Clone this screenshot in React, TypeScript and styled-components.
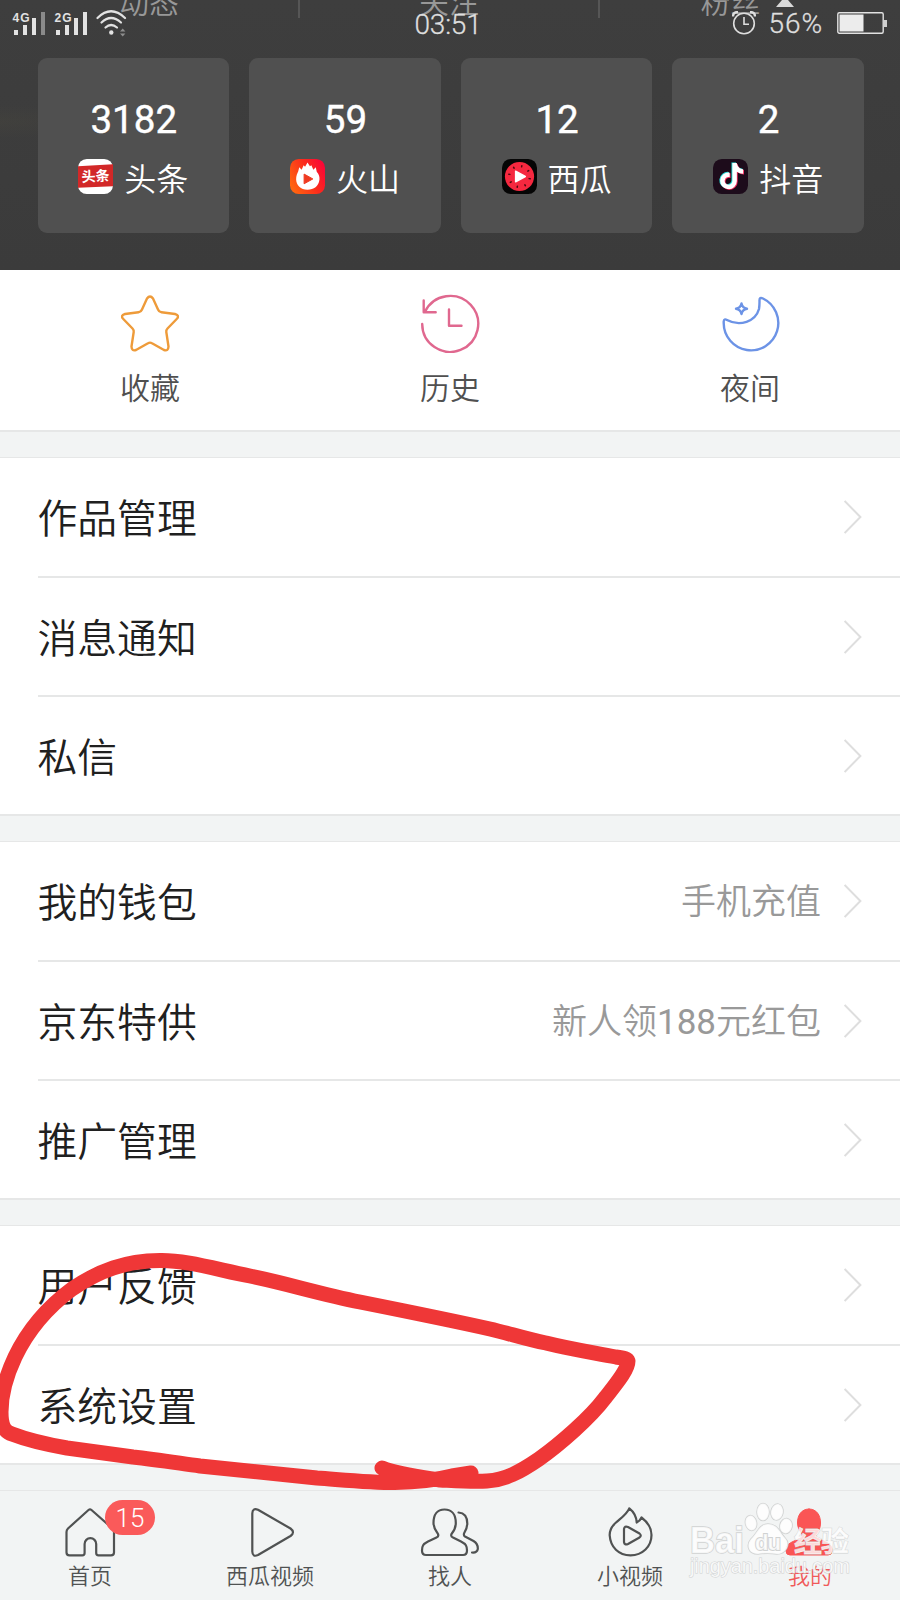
import React from "react";
import styled, { createGlobalStyle } from "styled-components";
import { FaTiktok } from "react-icons/fa6";

const GlobalStyle = createGlobalStyle`
  * { box-sizing: border-box; }
  body { margin: 0; background: #f2f4f4; }
`;

const CJK = `"Noto Sans CJK SC", "Noto Sans", sans-serif`;

const Screen = styled.div`
  position: relative;
  width: 900px;
  height: 1600px;
  overflow: hidden;
  display: flex;
  flex-direction: column;
  background: #f2f4f4;
  font-family: ${CJK};
  font-weight: 350;
`;

const Header = styled.header`
  height: 270px;
  display: flex;
  flex-direction: column;
  background:
    radial-gradient(ellipse at 0% 45%, rgba(74, 72, 62, 0.3), transparent 8%),
    linear-gradient(#3e3e3e, #3b3b3b);
`;

const CountTabs = styled.div`
  height: 58px;
  overflow: hidden;
  display: grid;
  grid-template-columns: repeat(3, 1fr);
`;

const CountTab = styled.div<{ $divided?: boolean }>`
  height: 18px;
  display: flex;
  align-items: flex-end;
  justify-content: center;
  gap: 15px;
  color: #989898;
  font-size: 30px;
  line-height: 36px;
  border-right: ${(p) => (p.$divided ? "2px solid #565656" : "0")};
  &:last-child {
    padding-right: 6px;
  }
`;

const Caret = styled.svg`
  align-self: flex-start;
  flex: none;
`;

const StatusBar = styled.div`
  position: absolute;
  top: 0;
  left: 0;
  width: 900px;
  height: 46px;
  display: flex;
  align-items: center;
  justify-content: space-between;
  padding: 0 13px 0 12px;
`;

const StatusGroup = styled.div`
  display: flex;
  align-items: center;
  width: 300px;
`;

const StatusEnd = styled(StatusGroup)`
  justify-content: flex-end;
  gap: 13px;
`;

const StatusText = styled.span<{ $tracking: number }>`
  color: #dedede;
  font: 300 28px/32px Roboto, sans-serif;
  letter-spacing: ${(p) => p.$tracking}px;
  -webkit-text-stroke: 0.3px #dedede;
`;

const Percent = styled(StatusText)`
  padding-top: 1px;
  margin-right: 1px;
`;

const Clock = styled(StatusText)`
  padding-top: 3px;
  margin-right: 3px;
`;

const Cards = styled.div`
  display: grid;
  grid-template-columns: repeat(4, 1fr);
  gap: 20px;
  padding: 0 36px 0 37.5px;
`;

const Card = styled.div`
  height: 175px;
  border-radius: 9px;
  background: #505050;
  color: #fff;
  display: flex;
  flex-direction: column;
  align-items: center;
`;

const CardCount = styled.div`
  margin: 39px 0 0 1px;
  font: 400 38.6px/46px Roboto, sans-serif;
  -webkit-text-stroke: 0.4px #fff;
`;

const CardSource = styled.div`
  display: flex;
  align-items: center;
  gap: 11px;
  margin-top: 11px;
  height: 46px;
  font-size: 32px;
  line-height: 46px;
`;

const Logo = styled.svg`
  display: block;
  margin-bottom: 2px;
`;

const Shortcuts = styled.div`
  height: 160px;
  background: #fff;
  display: grid;
  grid-template-columns: repeat(3, 1fr);
`;

const Shortcut = styled.div`
  display: flex;
  flex-direction: column;
  align-items: center;
  padding-top: 23px;
  color: #505050;
  font-size: 30px;
  line-height: 40px;
`;

const LineIcon = styled.svg`
  display: block;
  fill: none;
  stroke-width: 2.4;
  stroke-linecap: round;
  stroke-linejoin: round;
  margin-bottom: 13px;
`;

const Gap = styled.div`
  flex: none;
  height: 28px;
  border-top: 2px solid #e6e7e7;
  border-bottom: 1px solid #e6e7e7;
`;

const Section = styled.section<{ $height: number }>`
  flex: none;
  height: ${(p) => p.$height}px;
  background: #fff;
  display: flex;
  flex-direction: column;
  padding-left: 37.5px;
`;

const Row = styled.div`
  flex: 0 0 119px;
  display: flex;
  align-items: center;
  padding-right: 38px;
  border-bottom: 2px solid #e6e7e7;
  &:first-child {
    flex-basis: 120px;
  }
  &:last-child {
    flex: 1;
    border-bottom: 0;
  }
`;

const RowLabel = styled.span`
  flex: 1;
  color: #202020;
  font-size: 39.8px;
  line-height: 58px;
  margin-bottom: 2px;
`;

const RowNote = styled.span`
  color: #999;
  font-family: Roboto, ${CJK};
  font-size: 35px;
  line-height: 50px;
  margin: 4px 23px 0 0;
`;

const Digits = styled.span`
  font-weight: 400;
`;

const NavBar = styled.nav`
  height: 109px;
  display: grid;
  grid-template-columns: repeat(5, 1fr);
`;

const NavItem = styled.div<{ $active?: boolean }>`
  position: relative;
  display: flex;
  flex-direction: column;
  align-items: center;
  padding-top: 15px;
  color: ${(p) => (p.$active ? "#f05a5a" : "#505252")};
  font-size: 22px;
  line-height: 30px;
`;

const NavIcon = styled.svg`
  display: block;
  margin-bottom: 1px;
  fill: none;
  stroke: #505252;
  stroke-width: 2.2;
  stroke-linejoin: round;
  stroke-linecap: round;
`;

const Badge = styled.span`
  position: absolute;
  left: 105px;
  top: 9px;
  width: 50px;
  height: 35px;
  border-radius: 18px;
  background: #fa5a5a;
  color: #fff;
  text-align: center;
  font: 300 26px/37px Roboto, sans-serif;
`;

const Overlay = styled.svg`
  position: absolute;
  left: 0;
  top: 1220px;
  pointer-events: none;
`;

const Signal = ({ label, dim }: { label: string; dim?: boolean }) => (
  <svg width="42" height="28" viewBox="0 0 42 28" fill="#e2e2e2">
    <text x="0.5" y="12.5" fontFamily="Liberation Sans, sans-serif" fontWeight="700" fontSize="12" textLength="17">{label}</text>
    <rect x="2" y="21" width="4" height="5" />
    <rect x="11" y="16" width="4" height="10" />
    <rect x="20" y="9" width="4" height="17" />
    <rect x="29" y="3" width="4" height="23" fill={dim ? "#8a8a8a" : "#e2e2e2"} />
  </svg>
);

const Wifi = () => (
  <svg width="34" height="28" viewBox="0 0 34 28" fill="none" stroke="#e2e2e2" strokeWidth="2.2" strokeLinecap="round">
    <path d="M1.5 9 Q15 -4.500 29 9" />
    <path d="M5.500 13.500 Q15 4.500 25 13.500" />
    <path d="M9.500 18.500 Q15 13.500 21 18.500" />
    <circle cx="15.300" cy="23.500" r="2.200" fill="#e2e2e2" stroke="none" />
    <path d="M24 22.500l2.700-3 2.700 3zM24 24.500l2.700 3 2.700-3z" fill="#8e8e8e" stroke="none" />
  </svg>
);

const Alarm = () => (
  <svg width="24" height="24" viewBox="0 0 24 24" fill="none" stroke="#dedede" strokeWidth="1.6">
    <circle cx="12" cy="12.500" r="10.300" />
    <path d="M12 6v7.200h5" />
    <path d="M1 5.500Q1 1 6 1M23 5.500Q23 1 18 1" strokeWidth="2.400" />
  </svg>
);

const Battery = () => (
  <svg width="50" height="24" viewBox="0 0 50 24">
    <rect x="0.800" y="1.800" width="45.400" height="20.400" rx="1.500" fill="none" stroke="#e2e2e2" strokeWidth="1.400" />
    <rect x="2.500" y="3.500" width="24" height="17" fill="#ececec" />
    <rect x="47" y="9" width="3" height="7" fill="#cfcfcf" />
  </svg>
);

const ToutiaoLogo = () => (
  <Logo width="35" height="35" viewBox="0 0 36 36">
    <rect width="36" height="36" rx="9" fill="#fff" />
    <path d="M0 7.500L36 5.500V28L0 29.500z" fill="#d22828" />
    <text x="18" y="23" textAnchor="middle" transform="rotate(-3 18 18)" fontFamily="Noto Sans CJK SC" fontWeight="700" fontSize="14.500" fill="#fff">头条</text>
  </Logo>
);

const HuoshanLogo = () => (
  <Logo width="35" height="35" viewBox="0 0 36 36">
    <defs>
      <linearGradient id="lava" x1="0" y1="0.700" x2="1" y2="0.200">
        <stop offset="0" stopColor="#ff6410" />
        <stop offset="0.550" stopColor="#fb2c1c" />
        <stop offset="1" stopColor="#fa0538" />
      </linearGradient>
    </defs>
    <rect width="36" height="36" rx="9" fill="url(#lava)" />
    <path d="M18 3.500L20.500 7.500L22 6.500L24 11L26.500 8.500L27.500 13C30 16 30.500 18 30.300 21C29.500 28 24.500 31.500 18 31.500C11 31.500 6.500 27 6.300 21C6.200 17 7.500 15 8.500 12.500L9.500 8.500L12 11L14 6.500L15.500 8z" fill="#fff" />
    <path d="M14.500 15.500V25.500L23.500 20.500z" fill="#ef3a20" stroke="#ef3a20" strokeWidth="1" strokeLinejoin="round" />
  </Logo>
);

const SEEDS = [0, 45, 90, 135, 180, 225, 270, 315];

const XiguaLogo = () => (
  <Logo width="35" height="35" viewBox="0 0 36 36">
    <rect width="36" height="36" rx="9" fill="#050505" />
    <circle cx="18" cy="18" r="15" fill="#f5283f" />
    {SEEDS.map((a) => (
      <rect key={a} x="17.300" y="6" width="1.500" height="2.600" rx="0.700" fill="#4a0a10" transform={`rotate(${a + 12} 18 18)`} />
    ))}
    <path d="M14 12.500V23.500L24 18z" fill="#fff" stroke="#fff" strokeWidth="1.500" strokeLinejoin="round" />
  </Logo>
);

const DouyinLogo = () => (
  <Logo width="35" height="35" viewBox="0 0 36 36">
    <rect width="36" height="36" rx="9" fill="#1d0c1b" />
    <FaTiktok x={4.8} y={3.4} size={27} color="#2bdcd8" />
    <FaTiktok x={6.6} y={4.8} size={27} color="#f5285a" />
    <FaTiktok x={5.7} y={4.1} size={27} color="#fff" />
  </Logo>
);

const Chevron = () => (
  <svg width="18" height="34" viewBox="0 0 18 34" fill="none" stroke="#dedede" strokeWidth="2">
    <path d="M0.600 1L16.400 17L0.600 33" />
  </svg>
);

const CARDS = [
  { count: "3182", name: "头条", logo: <ToutiaoLogo /> },
  { count: "59", name: "火山", logo: <HuoshanLogo /> },
  { count: "12", name: "西瓜", logo: <XiguaLogo /> },
  { count: "2", name: "抖音", logo: <DouyinLogo /> },
];

type Item = { label: string; note?: React.ReactNode };

const SECTIONS: { height: number; items: Item[] }[] = [
  { height: 356, items: [{ label: "作品管理" }, { label: "消息通知" }, { label: "私信" }] },
  {
    height: 356,
    items: [
      { label: "我的钱包", note: "手机充值" },
      { label: "京东特供", note: <>新人领<Digits>188</Digits>元红包</> },
      { label: "推广管理" },
    ],
  },
  { height: 237, items: [{ label: "用户反馈" }, { label: "系统设置" }] },
];

const RedCircle = () => (
  <g fill="none" stroke="#ef3737" strokeWidth="15" strokeLinecap="round" strokeLinejoin="round">
    <path d="M382 1468C400 1475 420 1477 440 1480C460 1481 475 1482 487 1481C505 1480 520 1472 539 1459C560 1444 590 1418 605 1398C616 1384 628 1370 628 1361C627 1358 622 1358 616 1357C590 1352 570 1349 546 1343C525 1339 508 1333 490 1329C450 1320 410 1312 360 1302C320 1294 285 1283 250 1276C215 1269 185 1260 160 1260.500C125 1261 100 1270 72 1289C45 1309 27 1332 15 1357C7 1374 1 1392 1 1412C1 1427 5 1432 12 1434C30 1441 50 1445 67 1448C90 1451 110 1454 133 1457C156 1459.500 178 1463 200 1466C240 1470 280 1474 317 1478C345 1480 370 1482.500 395 1482.500C420 1482 440 1479 452 1476L471 1473" />
  </g>
);

const Watermark = () => (
  <g fill="#fff" fillOpacity="0.800" stroke="#d0d2d2" strokeWidth="1.500" paintOrder="stroke">
    <text x="690" y="1553" fontFamily="Liberation Sans, sans-serif" fontWeight="700" fontSize="36" textLength="54" lengthAdjust="spacingAndGlyphs">Bai</text>
    <ellipse cx="751" cy="1523" rx="5.500" ry="7.500" transform="rotate(-12 751 1523)" />
    <ellipse cx="763" cy="1512" rx="6" ry="8.500" />
    <ellipse cx="777" cy="1512" rx="6" ry="8" transform="rotate(10 777 1512)" />
    <ellipse cx="786" cy="1526" rx="6" ry="7.500" transform="rotate(12 786 1526)" />
    <path d="M768 1524C778 1524 780 1533 785 1538C791 1544 786 1554 777 1554C771 1553 764 1553 758 1554C748 1554 746 1545 751 1539C757 1534 759 1524 768 1524z" />
    <text x="755" y="1550" fontFamily="Liberation Sans, sans-serif" fontWeight="700" fontSize="22" strokeWidth="1.800" textLength="26">du</text>
    <text x="794" y="1552" fontFamily="Noto Sans CJK SC" fontWeight="700" fontSize="28" textLength="55" strokeWidth="0.800">经验</text>
    <text x="690" y="1573" fontFamily="Liberation Sans, sans-serif" fontSize="20" textLength="160" strokeWidth="1">jingyan.baidu.com</text>
  </g>
);

export default function App() {
  return (
    <Screen>
      <GlobalStyle />
      <Header>
        <CountTabs>
          <CountTab $divided>动态</CountTab>
          <CountTab $divided>关注</CountTab>
          <CountTab>
            粉丝
            <Caret width="18" height="7" viewBox="0 0 18 7"><path d="M6 0H12L18 7H0z" fill="#d9d9d9" /></Caret>
          </CountTab>
        </CountTabs>
        <Cards>
          {CARDS.map((c) => (
            <Card key={c.name}>
              <CardCount>{c.count}</CardCount>
              <CardSource>{c.logo}{c.name}</CardSource>
            </Card>
          ))}
        </Cards>
      </Header>
      <StatusBar>
        <StatusGroup><Signal label="4G" dim /><Signal label="2G" /><Wifi /></StatusGroup>
        <Clock $tracking={-0.2}>03:51</Clock>
        <StatusEnd>
          <Alarm />
          <Percent $tracking={0.9}>56%</Percent>
          <Battery />
        </StatusEnd>
      </StatusBar>

      <Shortcuts>
        <Shortcut>
          <LineIcon width="60" height="60" viewBox="0 0 60 60" stroke="#ee9b3a">
            <path d="M27 5.500Q30 1.500 33 5.500L38 16.500Q39 19 41.500 19.300L55 21Q60 22.500 56.700 26L47.500 35.500Q46 37 46.300 39L48.500 53.500Q48.300 58.500 44 57L32 50.300Q30 49 28 50.300L16 57Q11.700 58.500 11.500 53.500L13.700 39Q14 37 12.500 35.500L3.300 26Q0 22.500 5 21L18.500 19.300Q21 19 22 16.500z" />
          </LineIcon>
          收藏
        </Shortcut>
        <Shortcut>
          <LineIcon width="60" height="60" viewBox="0 0 60 60" stroke="#e0688f">
            <path d="M2.200 31A28 28 0 1 0 5 18.700M3.700 7.500V19.300H15.700M29 16.500V32.700H41.500" />
          </LineIcon>
          历史
        </Shortcut>
        <Shortcut>
          <LineIcon width="60" height="60" viewBox="0 0 60 60" stroke="#6c93e6">
            <path d="M39.500 7.500Q39.300 3.800 43 5.500A27.300 27.300 0 1 1 3.700 30V28.500Q4 25.300 7 27C20 34 35.500 28.500 39 16Q39.600 12 39.500 7.500z" />
            <path d="M21.500 10.500Q22.500 15 27 15.800Q22.500 16.500 21.500 21Q20.500 16.500 16 15.800Q20.500 15 21.500 10.500z" />
          </LineIcon>
          夜间
        </Shortcut>
      </Shortcuts>
      <Gap />

      {SECTIONS.map((s, i) => (
        <React.Fragment key={i}>
          <Section $height={s.height}>
            {s.items.map((it) => (
              <Row key={it.label}>
                <RowLabel>{it.label}</RowLabel>
                {it.note && <RowNote>{it.note}</RowNote>}
                <Chevron />
              </Row>
            ))}
          </Section>
          <Gap />
        </React.Fragment>
      ))}

      <NavBar>
        <NavItem>
          <NavIcon width="60" height="52" viewBox="0 0 60 52">
            <path d="M28.500 4Q30 2.800 31.500 4L52.500 22.500Q54 24 54 26V46.500Q54 49.300 51 49.300H38.500Q36.200 49.300 36.200 47V38A5.800 5.800 0 0 0 24.600 38V47Q24.600 49.300 22.300 49.300H9.500Q6.500 49.300 6.500 46.500V26Q6.500 24 8 22.500z" />
          </NavIcon>
          首页
          <Badge>15</Badge>
        </NavItem>
        <NavItem>
          <NavIcon width="60" height="52" viewBox="0 0 60 52">
            <path d="M12.300 7.500Q12.500 1.500 18 3.700L50.500 22.500Q55.500 26.200 50.500 30L18 49Q12.500 51.500 12.300 45.500z" />
          </NavIcon>
          西瓜视频
        </NavItem>
        <NavItem>
          <NavIcon width="60" height="52" viewBox="0 0 60 52">
            <path d="M24.500 3.500C17 3.500 13.500 9 13.500 17C13.500 22 16 25 18 28Q19 30.500 16.500 31.500L8 35.500C3 38 2 40 2 44.500Q2 49 6 49H43Q47 49 47 44.500C47 40 46 38 41 35.500L33 31.500Q30.500 30.500 31.500 28C34 25 35.800 22 35.800 17C35.800 9 32 3.500 24.500 3.500z" />
            <path d="M38.500 6.500C45 7 47.300 12 47.300 17.500C47.300 22 45.500 25 44 27.500Q43.500 29.500 45 30.500L53.500 35C57 37 58 39.500 57.800 43Q57 47 52 46.500" />
          </NavIcon>
          找人
        </NavItem>
        <NavItem>
          <NavIcon width="60" height="52" viewBox="0 0 60 52">
            <path d="M29.300 2.300C27 8 21 12 16 16.500C11.500 20.500 9.500 25 9.700 29.500C10.500 41 18.500 49.300 30.500 49.300C42.500 49.300 51.500 40.500 51.500 29C51.500 22 47.500 16 41.500 11.500Q40 15 36.700 16.500C36.500 11 34 6 29.300 2.300z" />
            <path d="M24 23Q24.500 19.500 28 21L39.500 27.500Q42 29.500 39.500 31.500L28 38Q24.500 39.500 24 36z" />
          </NavIcon>
          小视频
        </NavItem>
        <NavItem $active>
          <NavIcon width="60" height="52" viewBox="0 0 60 52">
            <path d="M29 3C21.500 3 17.500 9 17.500 17C17.500 22 20 25 22 28Q23 31 20.500 32L12 36C7 38.500 6 41 6 45Q6 49 10 49H48Q52 49 52 45C52 41 51 38.500 46 36L37.500 32Q35 31 36 28C39 25 40.500 22 40.500 17C40.500 9 36.500 3 29 3z" fill="#fa5555" stroke="#fa5555" strokeWidth="1" />
          </NavIcon>
          我的
        </NavItem>
      </NavBar>

      <Overlay width="900" height="380" viewBox="0 1220 900 380">
        <RedCircle />
        <Watermark />
      </Overlay>
    </Screen>
  );
}
